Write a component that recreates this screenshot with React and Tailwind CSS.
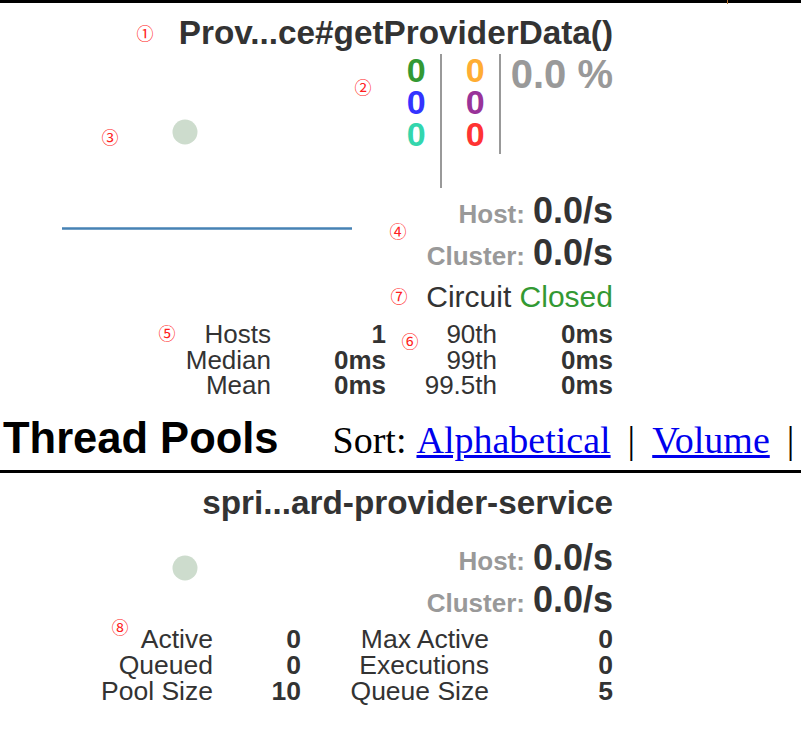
const ann = "absolute w-[18px] h-[18px] text-[17px] leading-[18px] text-center text-[#ff2020] font-['Noto_Sans_CJK_SC',sans-serif]";

function RateRow({ label, value }) {
  return (
    <div className="flex h-[42px] justify-end items-baseline">
      <span className="text-[26px] font-bold leading-[30px] text-[#999]">{label}</span>
      <span className="ml-[8px] text-[36px] font-bold leading-[42px] text-[#333]">{value}</span>
    </div>
  );
}

function Counter({ color, children }) {
  return <div className={`h-[32px] ${color}`}>{children}</div>;
}

export default function App() {
  const latency = [
    ["Hosts", "1", "90th", "0ms"],
    ["Median", "0ms", "99th", "0ms"],
    ["Mean", "0ms", "99.5th", "0ms"],
  ];
  const pool = [
    ["Active", "0", "Max Active", "0"],
    ["Queued", "0", "Executions", "0"],
    ["Pool Size", "10", "Queue Size", "5"],
  ];

  return (
    <div className="relative w-[801px] h-[733px] overflow-hidden bg-white text-[#333] font-['Liberation_Sans',Arial,sans-serif]">
      <div className="h-[3px] bg-black" />
      <div className="absolute left-[727px] top-0 w-[1px] h-[4px] bg-[#b07030]" />

      {/* Command monitor */}
      <div className="relative w-[615px] pr-[2px]">
        <svg className="absolute left-0 top-0" width="615" height="400">
          <circle cx="185" cy="129" r="12.5" fill="#cddccd" />
          <line x1="62" y1="225.5" x2="352" y2="225.5" stroke="#4682b4" strokeWidth="2.5" />
        </svg>

        <h3 className="relative h-[50px] pt-[10px] text-right text-[33.3px] font-bold leading-[40px] text-[#333]">
          Prov...ce#getProviderData()
        </h3>

        <div className="relative mt-[1px] flex justify-end items-start font-bold">
          <div className="flex flex-col items-end pr-[14px] pb-[38px] text-[34px] leading-[32px] border-r-2 border-[#999]">
            <Counter color="text-[#339933]">0</Counter>
            <Counter color="text-[#3333ff]">0</Counter>
            <Counter color="text-[#33d6ad]">0</Counter>
          </div>
          <div className="flex flex-col items-end pl-[24px] pr-[14px] pb-[4px] text-[34px] leading-[32px] border-r-2 border-[#999]">
            <Counter color="text-[#ffad33]">0</Counter>
            <Counter color="text-[#993399]">0</Counter>
            <Counter color="text-[#ff3333]">0</Counter>
          </div>
          <div className="pl-[10px] text-[40px] leading-[40px] text-[#999]">0.0 %</div>
        </div>

        <div className="relative mt-[2px]">
          <RateRow label="Host:" value="0.0/s" />
          <RateRow label="Cluster:" value="0.0/s" />
        </div>

        <div className="relative mt-[3px] h-[40px] text-right text-[30px] leading-[40px]">
          Circuit <span className="text-[#339933]">Closed</span>
        </div>

        <div className="relative mt-[5px] grid grid-cols-[271px_115px_111px_116px] auto-rows-[25.5px] text-[26px] leading-[25.5px] text-right">
          {latency.map((r) => (
            <div key={r[0]} className="contents">
              <div>{r[0]}</div>
              <div className="font-bold">{r[1]}</div>
              <div>{r[2]}</div>
              <div className="font-bold">{r[3]}</div>
            </div>
          ))}
        </div>
      </div>

      {/* Thread pools header */}
      <div className="mt-[14px] flex h-[50px] items-baseline pl-[3px] leading-[50px]">
        <h2 className="text-[43.5px] font-bold text-black">Thread Pools</h2>
        <div className="ml-[54px] flex items-baseline text-[38px] text-black font-['Liberation_Serif',serif]">
          <span>Sort:</span>
          <a href="#" className="ml-[10px] text-[#0000ee] underline">Alphabetical</a>
          <span className="mx-[17px]">|</span>
          <a href="#" className="text-[#0000ee] underline">Volume</a>
          <span className="ml-[17px]">|</span>
        </div>
      </div>
      <div className="mt-[7px] h-[3px] bg-black" />

      {/* Thread pool monitor */}
      <div className="relative w-[615px] pr-[2px]">
        <svg className="absolute left-0 top-0" width="615" height="200">
          <circle cx="185" cy="95" r="12.5" fill="#cddccd" />
        </svg>

        <h3 className="relative h-[50px] pt-[10px] text-right text-[33.3px] font-bold leading-[40px] text-[#333]">
          spri...ard-provider-service
        </h3>

        <div className="relative mt-[14px]">
          <RateRow label="Host:" value="0.0/s" />
          <RateRow label="Cluster:" value="0.0/s" />
        </div>

        <div className="relative mt-[5px] grid grid-cols-[213px_88px_188px_124px] auto-rows-[26px] text-[26.5px] leading-[26px] text-right">
          {pool.map((r) => (
            <div key={r[0]} className="contents">
              <div>{r[0]}</div>
              <div className="font-bold">{r[1]}</div>
              <div>{r[2]}</div>
              <div className="font-bold">{r[3]}</div>
            </div>
          ))}
        </div>
      </div>

      {/* Annotations */}
      <span className={`${ann} left-[136px] top-[24px]`}>①</span>
      <span className={`${ann} left-[354px] top-[78px]`}>②</span>
      <span className={`${ann} left-[101px] top-[128px]`}>③</span>
      <span className={`${ann} left-[389px] top-[222px]`}>④</span>
      <span className={`${ann} left-[390px] top-[287px]`}>⑦</span>
      <span className={`${ann} left-[158px] top-[324px]`}>⑤</span>
      <span className={`${ann} left-[401px] top-[332px]`}>⑥</span>
      <span className={`${ann} left-[111px] top-[618px]`}>⑧</span>
    </div>
  );
}
